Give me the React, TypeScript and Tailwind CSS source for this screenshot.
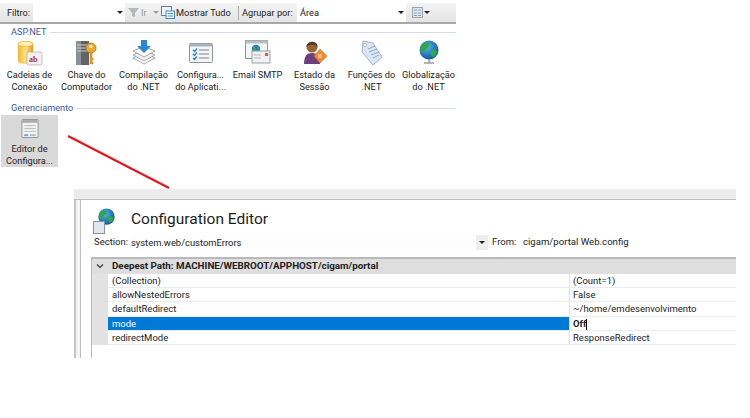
import React from "react";

const font = { fontFamily: 'Roboto,"Open Sans",sans-serif' };

function Arrow({ className = "" }: { className?: string }) {
  return <span className={"block w-0 h-0 border-x-[3px] border-x-transparent border-t-[3px] border-t-[#222] " + className} />;
}

function CadeiasIcon() {
  return (
    <svg width="26" height="26" viewBox="0 0 26 26">
      <defs>
        <linearGradient id="cg" x1="0" x2="1"><stop offset="0" stopColor="#f6b52c" /><stop offset="0.5" stopColor="#fde08a" /><stop offset="1" stopColor="#e89a1c" /></linearGradient>
      </defs>
      <path d="M1 4c0-4 15-4 15 0v17c0 4-15 4-15 0z" fill="url(#cg)" />
      <ellipse cx="8.5" cy="4" rx="7.5" ry="2.6" fill="#fff0b8" stroke="#e8a830" strokeWidth=".6" />
      <rect x="10" y="12" width="15" height="13" rx="1.5" fill="#f4f0ee" stroke="#aaa" strokeWidth=".7" />
      <text x="12" y="21.5" fontSize="8" fontWeight="700" fill="#a8323a" fontFamily="Liberation Serif">ab</text>
    </svg>
  );
}
function ChaveIcon() {
  return (
    <svg width="24" height="26" viewBox="0 0 24 26">
      <rect x="1" y="1" width="13" height="24" fill="#5e6468" />
      <rect x="1" y="1" width="5" height="24" fill="#8b9094" />
      <path d="M2 5h11M2 8h11M2 11h11" stroke="#c9cdd0" strokeWidth="1" />
      <circle cx="16" cy="8" r="5" fill="#eea92c" stroke="#b87912" strokeWidth=".8" />
      <circle cx="16" cy="6.5" r="1.4" fill="#fff" />
      <path d="M15 12v12h3v-2h-1v-2h1v-2h-1v-6z" fill="#e79c26" stroke="#b87912" strokeWidth=".5" />
    </svg>
  );
}
function CompilacaoIcon() {
  return (
    <svg width="24" height="26" viewBox="0 0 24 26">
      <path d="M12 13l11 5-11 6-11-6z" fill="#fff" stroke="#8a8f94" strokeWidth=".8" />
      <path d="M12 10l11 5-11 6-11-6z" fill="#f2f2f2" stroke="#8a8f94" strokeWidth=".8" />
      <path d="M12 6l11 5-11 6-11-6z" fill="#fff" stroke="#8a8f94" strokeWidth=".8" />
      <path d="M9 0h6v6h4l-7 7-7-7h4z" fill="#2a86d8" />
    </svg>
  );
}
function ConfigIcon() {
  return (
    <svg width="24" height="20" viewBox="0 0 24 20" className="mt-[3px]">
      <rect x=".5" y=".5" width="23" height="19" rx="1" fill="#f3f5f7" stroke="#8d9499" />
      <rect x=".5" y=".5" width="23" height="3" fill="#aab2b8" />
      <path d="M10 7h10M10 11h10M10 15h10" stroke="#7b8187" strokeWidth="1" />
      <path d="M4 7l1.5 1.5L8 5.5M4 11l1.5 1.5L8 9.5M4 15l1.5 1.5L8 13.5" stroke="#2b7fd4" strokeWidth="1.2" fill="none" />
    </svg>
  );
}
function EmailIcon() {
  return (
    <svg width="26" height="24" viewBox="0 0 26 24">
      <rect x=".5" y=".5" width="22" height="18" fill="#f4f5f6" stroke="#8d9499" />
      <rect x=".5" y=".5" width="22" height="3" fill="#b9bfc4" />
      <circle cx="11" cy="9" r="4.2" fill="#1f7fc4" />
      <path d="M8 7c2-1 3 1 3 3s-2 2-3 0zM12 6l2 2-1 2z" fill="#43a83a" />
      <rect x="7" y="11" width="18" height="12" fill="#f1f1f1" stroke="#9a9fa3" />
      <rect x="20" y="13" width="3" height="3" fill="#d45a4a" />
      <path d="M9 15h7M9 18h7" stroke="#b5b9bc" />
    </svg>
  );
}
function EstadoIcon() {
  return (
    <svg width="26" height="26" viewBox="0 0 26 26">
      <path d="M2 24c0-8 3-11 8-11s8 3 8 11z" fill="#6e3f7e" />
      <circle cx="10" cy="7" r="5.500" fill="#9a6238" />
      <path d="M4.500 7c0-6 11-7 11 0-2-3-8-3-11 0z" fill="#5b3820" />
      <path d="M18 9l7 7-7 7-6-7z" fill="#ef8a30" stroke="#d66f18" strokeWidth=".5" />
      <path d="M16 15h4M16 17h4" stroke="#fff" strokeWidth=".8" />
    </svg>
  );
}
function FuncoesIcon() {
  return (
    <svg width="24" height="26" viewBox="0 0 24 26">
      <path d="M3 1l10 2 9 14-9 8L2 12z" fill="#d7e6f5" stroke="#8fa3b5" strokeWidth=".8" />
      <path d="M8 9l7-3M9 12l8-3M11 15l8-3M13 18l6-3" stroke="#8ea0b0" strokeWidth=".9" />
      <circle cx="5" cy="5" r="1.600" fill="#fff" stroke="#8fa3b5" strokeWidth=".6" />
    </svg>
  );
}
function GlobeIcon({ stand = true, size = 22 }: { stand?: boolean; size?: number }) {
  return (
    <svg width={size} height={size * 26 / 22} viewBox="0 0 22 26">
      <defs>
        <radialGradient id="gl" cx=".4" cy=".35" r=".7"><stop offset="0" stopColor="#55b5ee" /><stop offset="1" stopColor="#0f4f9e" /></radialGradient>
      </defs>
      <circle cx="11" cy="10" r="9.500" fill="url(#gl)" />
      <path d="M4 5c3-3 6-3 7-1s-1 4-3 5-1 4-3 4-4-5-1-8zM13 10c3-1 6 0 6 2s-2 5-4 5-3-5-2-7z" fill="#2fa84a" />
      {stand && <path d="M6 23h10M11 19v4" stroke="#9aa0a5" strokeWidth="1.6" />}
    </svg>
  );
}
function EditorIcon() {
  return (
    <svg width="18" height="20" viewBox="0 0 18 20">
      <rect x=".5" y=".5" width="17" height="19" rx="1" fill="#f2f2f2" stroke="#8f9498" />
      <rect x="1" y="1" width="16" height="3" fill="#a9aeb2" />
      <path d="M3 7h12M3 10h12M3 13h12" stroke="#b6babd" />
      <path d="M3 17h4" stroke="#55aee0" strokeWidth="2" />
      <path d="M9 17h6" stroke="#b6babd" strokeWidth="2" />
    </svg>
  );
}

const items: [React.ReactNode, string, string][] = [
  [<CadeiasIcon />, "Cadeias de", "Conexão"],
  [<ChaveIcon />, "Chave do", "Computador"],
  [<CompilacaoIcon />, "Compilação", "do .NET"],
  [<ConfigIcon />, "Configura...", "do Aplicati..."],
  [<EmailIcon />, "Email SMTP", ""],
  [<EstadoIcon />, "Estado da", "Sessão"],
  [<FuncoesIcon />, "Funções do", ".NET"],
  [<GlobeIcon />, "Globalização", "do .NET"],
];

function Header({ label }: { label: string }) {
  return (
    <div className="flex items-center pl-[11px] h-[14px] text-[9.2px] text-[#3c5a9a]">
      <span>{label}</span>
      <span className="flex-1 ml-[3px] h-px bg-[#d3deee]" />
    </div>
  );
}

const rows: [string, string][] = [
  ["(Collection)", "(Count=1)"],
  ["allowNestedErrors", "False"],
  ["defaultRedirect", "~/home/emdesenvolvimento"],
  ["mode", "Off"],
  ["redirectMode", "ResponseRedirect"],
];

export default function App() {
  return (
    <div className="relative w-[750px] h-[418px] bg-white overflow-hidden text-[#222]" style={font}>
      <div className="w-[456px] h-[168px]">
        <div className="pt-[3px]">
          <div className="h-[21px] flex items-center pl-[7px] text-[9.2px] bg-gradient-to-b from-[#f4f4f4] to-[#e4e4e4] border-b-2 border-[#a8a8a8]">
            <span className="w-[26px]">Filtro:</span>
            <span className="w-[92px] h-[19px] bg-white flex items-center justify-end pr-[2px]"><Arrow /></span>
            <svg width="11" height="11" viewBox="0 0 11 11" className="ml-[3px]"><path d="M0 1h11L7 6v4L4 9V6z" fill="#b4b8bb" /></svg>
            <span className="ml-[2px] w-[12px] text-[#999]">Ir</span>
            <Arrow className="opacity-40" />
            <svg width="14" height="13" viewBox="0 0 14 13" className="ml-[2px]">
              <rect x=".5" y=".5" width="10" height="9" fill="#eef3f9" stroke="#5f7f9f" />
              <rect x="5" y="5" width="8.500" height="7.500" fill="#fff" stroke="#3f8cd0" />
              <path d="M6.500 7.500h5.500M6.500 10h5.500" stroke="#3f8cd0" />
            </svg>
            <span className="ml-px w-[62px] whitespace-nowrap">Mostrar Tudo</span>
            <span className="w-px h-[14px] bg-[#aaa]" />
            <span className="ml-[3px] w-[55px] whitespace-nowrap">Agrupar por:</span>
            <span className="w-[109px] h-[19px] bg-white flex items-center justify-between pl-[3px] pr-[2px]">Área<Arrow /></span>
            <svg width="11" height="11" viewBox="0 0 11 11" className="ml-[6px]">
              <rect x=".5" y=".5" width="10" height="10" fill="#dfe8ef" stroke="#9aa5ad" />
              <path d="M2 3h3M6 3h3M2 6h3M6 6h3M2 8.500h3M6 8.500h3" stroke="#7f9fb8" />
            </svg>
            <Arrow className="ml-[1px]" />
          </div>
        </div>
        <div className="mt-[1px]">
          <Header label="ASP.NET" />
          <div className="ml-px grid grid-cols-[repeat(8,57px)] h-[58px]">
            {items.map(([icon, a, b]) => (
              <div key={a} className="flex flex-col items-center">
                <div className="h-[30px] pt-[1px] flex items-start justify-center">{icon}</div>
                <span className="text-[9.2px] leading-[12px] whitespace-nowrap">{a}</span>
                <span className="text-[9.2px] leading-[12px] whitespace-nowrap">{b}</span>
              </div>
            ))}
          </div>
          <div className="mt-[4px]"><Header label="Gerenciamento" /></div>
          <div className="ml-px w-[57px] h-[52px] bg-[#d9d9d9] flex flex-col items-center pt-[4px]">
            <EditorIcon />
            <span className="mt-[5px] text-[9.2px] leading-[12px] whitespace-nowrap">Editor de</span>
            <span className="text-[9.2px] leading-[12px] whitespace-nowrap">Configura...</span>
          </div>
        </div>
      </div>

      <div className="mt-[21px] ml-[74px] w-[662px]">
        <div className="h-[10px] bg-[#ececec] border-b border-[#bdbdbd] box-content" />
        <div className="h-[158px] flex">
          <div className="w-[2px] bg-[#c4c4c4]" />
          <div className="w-[4px] bg-[#f4f4f4]" />
          <div className="flex-1 border-l border-[#bdbdbd] min-w-0 pl-[10px]">
            <div className="h-[35px] flex items-start">
              <div className="relative w-[24px] h-[26px] mt-[8px] ml-[2px]">
                <span className="absolute left-[4px] top-0"><GlobeIcon stand={false} size={19} /></span>
                <span className="absolute left-0 bottom-0 w-[12px] h-[13px] bg-[#dfe7ef] border border-[#8a939a]" />
              </div>
              <span className="ml-[14px] mt-[9px] text-[15.5px] leading-[20px] text-[#1c1c1c] whitespace-nowrap">Configuration Editor</span>
            </div>
            <div className="h-[15px] flex items-center text-[9.5px] ml-[3px]">
              <span className="w-[36px]">Section:</span>
              <span className="w-[346px] h-[15px] leading-[15px] text-[9.4px] bg-[#fdfdfd] pl-[1px]">system.web/customErrors</span>
              <span className="w-[12px] h-[15px] bg-[#eeeeee] flex items-center justify-center"><Arrow /></span>
              <span className="ml-[4px] w-[31px]">From:</span>
              <span className="text-[9.6px] whitespace-nowrap">cigam/portal Web.config</span>
            </div>
            <div className="mt-[7px] h-[101px] border-l border-t-2 border-[#b9b9b9]">
              <div className="h-[15px] bg-[#dedede] flex items-center text-[9.8px] font-bold">
                <svg width="8" height="5" viewBox="0 0 8 5" className="ml-[4px]"><path d="M1 .5l3 3 3-3" fill="none" stroke="#333" strokeWidth="1.2" /></svg>
                <span className="ml-[8px] whitespace-nowrap">Deepest Path: MACHINE/WEBROOT/APPHOST/cigam/portal</span>
              </div>
              <div className="flex">
                <div className="w-[16px] h-[71px] bg-[#e2e2e2]" />
                <div className="flex-1 min-w-0">
                  {rows.map(([k, v]) => {
                    const sel = k === "mode";
                    return (
                      <div key={k} className="flex h-[14.2px] border-b border-[#e9edf2] text-[9.5px] leading-[14px]">
                        <span className={"w-[462px] pl-[4px] border-r border-[#e3e3e3] " + (sel ? "bg-[#0078d7] text-white" : "")}>{k}</span>
                        <span className={"pl-[3px] " + (sel ? "font-bold" : "")}>{v}{sel && <span className="inline-block w-px h-[11px] bg-black align-middle" />}</span>
                      </div>
                    );
                  })}
                </div>
              </div>
            </div>
          </div>
        </div>
      </div>

      <svg className="absolute left-[67px] top-[135px]" width="104" height="55" viewBox="0 0 104 55">
        <path d="M1 1L102 53" stroke="#e8141c" strokeWidth="2" />
      </svg>
    </div>
  );
}
